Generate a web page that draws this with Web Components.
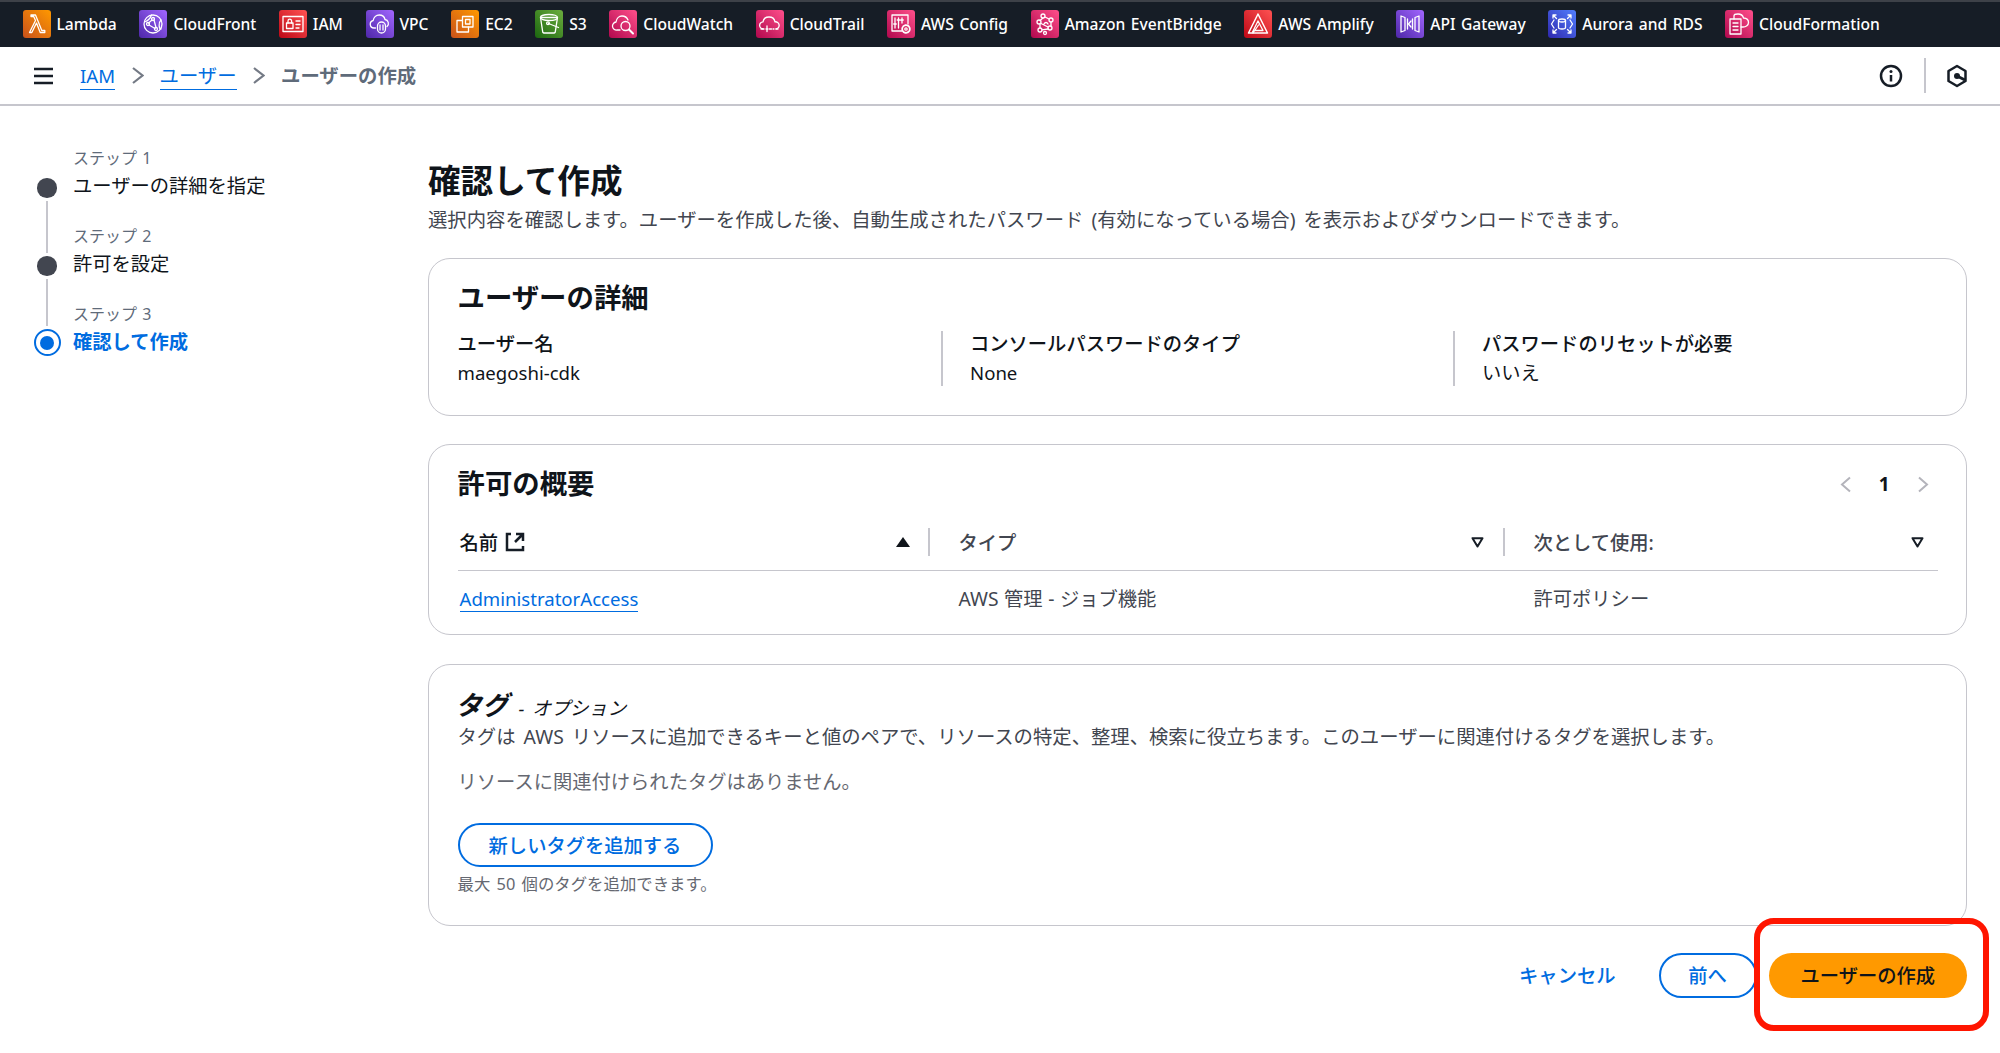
<!DOCTYPE html>
<html lang="ja"><head><meta charset="utf-8"><title>ユーザーの作成</title>
<style>
html,body{margin:0;padding:0;background:#fff;}
body{font-family:"Noto Sans","Noto Sans CJK JP",sans-serif;color:#0f141a;width:2000px;height:1053px;overflow:hidden;position:relative;word-spacing:3px;}
</style></head><body>
<aws-svc-bar>
<aws-svc icon="lambda">Lambda</aws-svc>
<aws-svc icon="cloudfront">CloudFront</aws-svc>
<aws-svc icon="iam">IAM</aws-svc>
<aws-svc icon="vpc">VPC</aws-svc>
<aws-svc icon="ec2">EC2</aws-svc>
<aws-svc icon="s3">S3</aws-svc>
<aws-svc icon="cloudwatch">CloudWatch</aws-svc>
<aws-svc icon="cloudtrail">CloudTrail</aws-svc>
<aws-svc icon="config">AWS Config</aws-svc>
<aws-svc icon="eventbridge">Amazon EventBridge</aws-svc>
<aws-svc icon="amplify">AWS Amplify</aws-svc>
<aws-svc icon="apigw">API Gateway</aws-svc>
<aws-svc icon="rds">Aurora and RDS</aws-svc>
<aws-svc icon="cfn">CloudFormation</aws-svc>
</aws-svc-bar>
<aws-crumbs></aws-crumbs>
<aws-layout>
  <aws-steps slot="side">
    <aws-step state="done" first label="ステップ 1">ユーザーの詳細を指定</aws-step>
    <aws-step state="done" label="ステップ 2">許可を設定</aws-step>
    <aws-step state="active" last label="ステップ 3">確認して作成</aws-step>
  </aws-steps>
  <aws-page-head heading="確認して作成">選択内容を確認します。ユーザーを作成した後、自動生成されたパスワード (有効になっている場合) を表示およびダウンロードできます。</aws-page-head>
  <aws-card heading="ユーザーの詳細">
    <aws-kv-row>
      <aws-kv label="ユーザー名"><span style="font-size:18.600px">maegoshi-cdk</span></aws-kv>
      <aws-kv label="コンソールパスワードのタイプ"><span style="font-size:18.600px">None</span></aws-kv>
      <aws-kv label="パスワードのリセットが必要">いいえ</aws-kv>
    </aws-kv-row>
  </aws-card>
  <aws-card heading="許可の概要" pager tall>
    <aws-perm-table></aws-perm-table>
  </aws-card>
  <aws-tags-card></aws-tags-card>
  <aws-actions></aws-actions>
</aws-layout>
<aws-annotation></aws-annotation>
<script>
const G={
 orange:['#c8511b','#ff9900'],purple:['#4d27a8','#a166ff'],red:['#bd0816','#ff5252'],
 green:['#1b660f','#6cae3e'],pink:['#b0084d','#ff4f8b'],blue:['#2e27ad','#527fff']};
const I={
 lambda:['orange','<path d="M6.500 22.500l6-12-1.800-4H8V5h4.500l6.300 15.500h3V22.500h-4.600L13.500 13l-4.700 9.500z"/>'],
 cloudfront:['purple','<circle cx="14" cy="14" r="9"/><circle cx="14" cy="9" r="1.500"/><circle cx="9" cy="14" r="1.500"/><circle cx="17" cy="19" r="1.500"/><path d="M13 10L9.500 13M10 15l6 3.500M15 10l2 7.500M5.500 12c3-1 6-4 7-7M22 10c-3 3-2 9 0 9"/>'],
 iam:['red','<rect x="4" y="6.500" width="20" height="15"/><rect x="7.500" y="13" width="6.500" height="5.500"/><path d="M9 13v-2a1.800 1.800 0 0 1 3.600 0v2M17 11h4M17 14.500h4M17 18h3"/>'],
 vpc:['purple','<path d="M9.500 18H8a3.800 3.800 0 0 1-.800-7.500C7.700 7.200 10.300 5 13.200 5c3 0 5.300 2 5.800 4.500a4 4 0 0 1 2 7"/><rect x="11.500" y="12" width="8" height="11" rx="4"/><path d="M14 15v5M17 15v5"/>'],
 ec2:['orange','<rect x="11.500" y="6.500" width="10.500" height="10.500"/><path d="M11.500 10.500H6V22h11.500v-5M14.500 9.500h4.500v4.500h-4.500z"/>'],
 s3:['green','<path d="M5.500 7.500h17l-2.300 14.800a1 1 0 0 1-1 .7H8.800a1 1 0 0 1-1-.7z"/><path d="M5.500 7.500c0-1.800 3.500-3 8.500-3s8.500 1.200 8.500 3-3.500 3-8.500 3-8.500-1.200-8.500-3z"/><path d="M13.500 13.500l10 4" /><circle cx="13" cy="13.300" r="1.400"/>'],
 cloudwatch:['pink','<path d="M11 20H8a4 4 0 0 1-1-8c.500-3.500 3-6 6-6 3 0 5 1.500 6 4"/><circle cx="16.500" cy="16" r="4.500"/><path d="M20 19.500l4 4" stroke-width="2"/>'],
 cloudtrail:['pink','<path d="M8 19H7.500a3.600 3.600 0 0 1-.500-7.200C7.500 9 10 7 13 7c3 0 5.500 2 6 4.800A3.600 3.600 0 0 1 20 19"/><path d="M5 19h3M10 19h8M20 19h3M11 16v6" stroke-dasharray="2 1.500"/>'],
 config:['pink','<path d="M15 21H5V5h16v9"/><path d="M8 8v10M11.500 8v10M15 8v5"/><path d="M6.800 14h2.400M10.300 10h2.400M13.800 10h2.400" stroke-width="1.500"/><circle cx="19" cy="19" r="3.800" fill="#d7235f" stroke-dasharray="1.600 .8" stroke-width="1.800"/><circle cx="19" cy="19" r="1.200"/>'],
 eventbridge:['pink','<circle cx="12" cy="6" r="2"/><circle cx="20" cy="10" r="2"/><circle cx="8" cy="12" r="2"/><circle cx="19" cy="18" r="2"/><circle cx="9" cy="20" r="2"/><circle cx="14" cy="23" r="1.500"/><path d="M14 7l4 2M10 13.500l7 3.500M12 8l-3 2.500M9 14v4M17 19l-6 .800M20 12v4M13 14c1-2 3-2 4 0"/>'],
 amplify:['red','<path d="M14 4L4.500 23h19z" stroke-width="1.500"/><path d="M14 11l-5.500 11M14 11l5 9.500M11 20.500h8M9 23l5.500-8" stroke-width="1.300"/>'],
 apigw:['purple','<path d="M5 6l4 1.500v13L5 22zM23 6l-4 1.500v13l4 1.500zM11.500 9v10M16.500 9v10"/><path d="M15 11l-2.500 3 2.500 3"/>'],
 rds:['blue','<ellipse cx="14" cy="10.500" rx="3.500" ry="1.500"/><path d="M10.500 10.500v7c0 .800 1.500 1.500 3.500 1.500s3.500-.7 3.500-1.500v-7M6 10l-2.500 4L6 18M22 10l2.500 4L22 18M5 5l3.500 3.500M5 5h3M5 5v3M23 5l-3.500 3.500M23 5h-3M23 5v3M5 23l3.500-3.500M5 23h3M5 23v-3M23 23l-3.500-3.500M23 23h-3M23 23v-3"/>'],
 cfn:['pink','<rect x="5" y="9" width="11" height="15"/><path d="M8 13h5M8 16.500h5M8 20h5M9 9V5.800C9 4.800 11 4 13 4c3 0 5 2 5.500 4 3 .200 5 2 5 4.500S21 17 18 17h-2"/>']
};
let uid=0;
function icon(name){const [g,body]=I[name];const id='g'+(uid++);const [a,b]=G[g];
 return `<svg width="28" height="28" viewBox="0 0 28 28" aria-hidden="true"><defs><linearGradient id="${id}" x1="0" y1="1" x2="1" y2="0"><stop offset="0" stop-color="${a}"/><stop offset="1" stop-color="${b}"/></linearGradient></defs><rect width="28" height="28" rx="3" fill="url(#${id})"/><g fill="none" stroke="#fff" stroke-width="1.300" stroke-linejoin="round" stroke-linecap="round">${body}</g></svg>`;}
function def(tag,html,setup){customElements.define(tag,class extends HTMLElement{
 connectedCallback(){if(this.shadowRoot)return;const s=this.attachShadow({mode:'open'});s.innerHTML=typeof html==='function'?html(this):html;if(setup)setup(this,s);}});}

def('aws-svc-bar',`<style>:host{display:flex;box-sizing:border-box;height:47px;background:#161d26;border-top:2px solid #3d4148;padding:8px 0 0 22.500px;gap:22.600px;align-items:flex-start;word-spacing:1.500px;}</style><slot></slot>`);
def('aws-svc',h=>`<style>:host{display:inline-flex;align-items:center;gap:6px;height:28px;color:#fff;font-size:15.600px;font-weight:500;line-height:28px;white-space:nowrap;}svg{display:block;flex:none;}</style>${icon(h.getAttribute('icon'))}<span><slot></slot></span>`);

const chev=`<svg width="12" height="17" viewBox="0 0 12 17"><path d="M1 1l9.500 7.500L1 16" fill="none" stroke="#747a85" stroke-width="2.200"/></svg>`;
def('aws-crumbs',`<style>:host{display:flex;box-sizing:border-box;height:59px;border-bottom:2px solid #c6c6cd;align-items:center;padding:0 0 0 33px;font-size:19.350px;color:#424650;}
a{color:#006ce0;text-decoration:none;border-bottom:1.500px solid #006ce0;line-height:24px;height:25px;display:block;margin-top:2px;}
a.iam{font-size:18.600px;}
.menu{display:block;margin-right:26px;}
.sep{margin:0 16px 0 16.500px;display:block;}
.cur{font-weight:600;color:#5f6b7a;line-height:24px;}
.sp{flex:1;}
.div{width:1.500px;height:35px;background:#c6c6cd;margin:0 20.500px 0 21px;}
svg{display:block;flex:none;}
</style>
<svg class="menu" width="21" height="18" viewBox="0 0 21 18"><path d="M1 2h19M1 9h19M1 16h19" stroke="#161d26" stroke-width="2.500"/></svg>
<a class="iam">IAM</a><span class="sep">${chev}</span><a>ユーザー</a><span class="sep">${chev}</span><span class="cur">ユーザーの作成</span><span class="sp"></span>
<svg width="24" height="24" viewBox="0 0 24 24"><circle cx="12" cy="12" r="10" fill="none" stroke="#161d26" stroke-width="2.500"/><path d="M12 11v6.500" stroke="#161d26" stroke-width="2.500"/><circle cx="12" cy="7.500" r="1.500" fill="#161d26"/></svg>
<span class="div"></span>
<svg width="22" height="24" viewBox="0 0 22 24" style="margin-right:32px"><path d="M11 2l8.500 5v10L11 22l-8.500-5V7z" fill="none" stroke="#161d26" stroke-width="2.500" stroke-linejoin="round"/><circle cx="11" cy="12" r="3" fill="#161d26"/><path d="M11 12l8 4" stroke="#161d26" stroke-width="3"/></svg>`);

def('aws-layout',`<style>:host{display:grid;grid-template-columns:428px 1539px;height:947px;align-content:start;}
.side{grid-row:1/span 9;padding-top:40px;}
.main{display:flex;flex-direction:column;padding-top:55px;}
</style><div class="side"><slot name="side"></slot></div><div class="main"><slot></slot></div>`);
def('aws-steps',`<style>:host{display:block;padding-left:33px;word-spacing:1px;}</style><slot></slot>`);
def('aws-step',h=>{const act=h.getAttribute('state')==='active',first=h.hasAttribute('first'),last=h.hasAttribute('last');
 return `<style>:host{display:grid;grid-template-columns:28px 1fr;column-gap:12px;height:78px;}
.rail{display:flex;flex-direction:column;align-items:center;}
.top{height:${first?32:act?24:29}px;width:2.500px;background:${first?'transparent':'#c6c6cd'};margin-bottom:${first?0:3}px;flex:none;}
.dot{width:19.500px;height:19.500px;border-radius:50%;background:#424650;flex:none;}
.ring{width:27px;height:27px;box-sizing:border-box;border:2.500px solid #006ce0;border-radius:50%;display:flex;align-items:center;justify-content:center;flex:none;}
.ring i{display:block;width:14px;height:14px;background:#006ce0;border-radius:50%;}
.bot{flex:1;width:2.500px;background:${last?'transparent':'#c6c6cd'};margin-top:3px;}
.l{font-size:16px;line-height:24px;color:#5f6b7a;}
.t{font-size:19.300px;line-height:30px;padding-top:1px;color:${act?'#006ce0':'#0f141a'};font-weight:${act?700:400};}
</style><div class="rail"><div class="top"></div>${act?'<div class="ring"><i></i></div>':'<div class="dot"></div>'}<div class="bot"></div></div>
<div><div class="l">${h.getAttribute('label')}</div><div class="t"><slot></slot></div></div>`});
def('aws-page-head',h=>`<style>:host{display:block;margin-bottom:25px;}
h1{margin:0;font-size:32.600px;line-height:40px;font-weight:700;color:#0f141a;}
p{margin:6px 0 0;font-size:19.350px;line-height:26px;color:#424650;white-space:nowrap;}</style><h1>${h.getAttribute('heading')}</h1><p><slot></slot></p>`);
const cv=(d,c)=>`<svg width="13" height="17" viewBox="0 0 13 17"><path d="${d}" fill="none" stroke="${c}" stroke-width="2"/></svg>`;
def('aws-card',h=>`<style>:host{display:block;box-sizing:border-box;border:1.500px solid #c6c6cd;border-radius:22px;padding:22px 28.500px 0;margin-bottom:28.500px;background:#fff;}
.h{display:flex;align-items:center;height:34px;margin-bottom:${h.hasAttribute('tall')?27:15.5}px;}
h2{margin:0;font-size:27.400px;line-height:34px;font-weight:700;flex:1;}
.p{display:flex;align-items:center;font-weight:700;font-size:19px;margin-right:8px;}
.p b{margin:0 27px;font-weight:700;}
svg{display:block;}
</style><div class="h"><h2>${h.getAttribute('heading')}</h2>${h.hasAttribute('pager')?`<div class="p">${cv('M11 1.500L3 8.500l8 7','#b4b4bb')}<b>1</b>${cv('M2 1.500l8 7-8 7','#b4b4bb')}</div>`:''}</div><slot></slot>`);
def('aws-kv-row',`<style>:host{display:grid;grid-template-columns:483px 512px 1fr;padding-bottom:29px;}</style><slot></slot>`);
def('aws-kv',h=>`<style>:host{display:block;height:55px;}:host(:not(:first-child)){border-left:2px solid #c6c6cd;padding-left:27.500px;}
.l{font-size:19.300px;line-height:26px;font-weight:500;}.v{font-size:19.300px;line-height:26px;margin-top:3px;color:#0f141a;}</style><div class="l">${h.getAttribute('label')}</div><div class="v"><slot></slot></div>`);
const upSolid=`<svg width="14" height="10" viewBox="0 0 14 10"><path d="M7 0l7 10H0z" fill="#0f141a"/></svg>`;
const dnOut=`<svg width="13" height="11" viewBox="0 0 13 11"><path d="M1.500 1.200h10L6.500 9.500z" fill="none" stroke="#161d26" stroke-width="2" stroke-linejoin="round"/></svg>`;
def('aws-perm-table',`<style>:host{display:block;padding-bottom:12px;font-size:19.300px;}
.g{display:grid;grid-template-columns:472px 575px 1fr;}
.hd{height:42px;border-bottom:1.500px solid #c6c6cd;align-items:start;}
.th{display:flex;align-items:center;height:28px;margin-top:0;font-weight:500;color:#424650;padding-left:29px;}
.th:first-child{padding-left:2px;color:#0f141a;}
.th .n{flex:1;display:flex;align-items:center;gap:6.500px;}
.th .s{width:14px;display:flex;justify-content:center;margin-right:18px;}
.th:not(:last-child){border-right:2px solid #c6c6cd;box-sizing:border-box;}
.th:last-child .s{margin-right:13px;}
.td{padding-left:29px;color:#424650;line-height:26px;padding-top:15px;height:51px;box-sizing:border-box;word-spacing:.5px;}
.td:first-child{padding-left:2px;}
a{color:#006ce0;border-bottom:1.500px solid #006ce0;text-decoration:none;display:inline-block;line-height:25px;font-size:18.600px;}
svg{display:block;}
</style>
<div class="g hd">
<div class="th"><span class="n">名前<svg width="20" height="20" viewBox="0 0 20 20" fill="none" stroke="#161d26" stroke-width="2.500"><path d="M6 2H2v16h16v-4M11 2h7v7M18 2l-8 8"/></svg></span><span class="s">${upSolid}</span></div>
<div class="th"><span class="n">タイプ</span><span class="s">${dnOut}</span></div>
<div class="th"><span class="n">次として使用:</span><span class="s">${dnOut}</span></div>
</div>
<div class="g"><div class="td"><a>AdministratorAccess</a></div><div class="td">AWS 管理 - ジョブ機能</div><div class="td">許可ポリシー</div></div>`);
def('aws-btn',h=>{const p=h.hasAttribute('primary'),l=h.hasAttribute('link');return `<style>:host{display:inline-flex;box-sizing:border-box;height:45px;align-items:center;justify-content:center;border-radius:23px;font-size:19.300px;font-weight:500;white-space:nowrap;
${p?'background:#ff9900;color:#0f141a;':l?'color:#006ce0;':'border:2.500px solid #006ce0;color:#006ce0;'}}</style><slot></slot>`});
def('aws-tags-card',`<style>:host{display:block;box-sizing:border-box;border:1.500px solid #c6c6cd;border-radius:22px;padding:22.500px 28.500px 0;height:262px;margin-bottom:27px;}
.h{line-height:36px;height:36px;font-style:italic;display:flex;align-items:baseline;margin-left:-2px;}
.h b{font-size:26.500px;font-weight:700;}
.h span{font-size:18.800px;margin-left:10px;}
.d{font-size:19.350px;line-height:26px;color:#424650;margin-top:.5px;white-space:nowrap;}
.e{font-size:19.300px;line-height:26px;color:#656871;margin-top:19.300px;}
aws-btn{width:255px;height:44px;margin-top:28px;display:flex;}
.c{font-size:16.400px;line-height:22px;color:#656871;margin-top:6.500px;word-spacing:2px;}
</style><div class="h"><b>タグ</b><span>- オプション</span></div>
<div class="d">タグは AWS リソースに追加できるキーと値のペアで、リソースの特定、整理、検索に役立ちます。このユーザーに関連付けるタグを選択します。</div>
<div class="e">リソースに関連付けられたタグはありません。</div>
<aws-btn>新しいタグを追加する</aws-btn>
<div class="c">最大 50 個のタグを追加できます。</div>`);
def('aws-actions',`<style>:host{display:flex;justify-content:flex-end;align-items:center;gap:12px;height:45px;}
.c{width:98px;}.p{width:198.500px;}.l{margin-right:31px;}</style>
<aws-btn link class="l">キャンセル</aws-btn><aws-btn class="c">前へ</aws-btn><aws-btn primary class="p">ユーザーの作成</aws-btn>`);
def('aws-annotation',`<style>:host{position:absolute;left:1754px;top:918px;width:235px;height:113px;box-sizing:border-box;border:6.500px solid #ff1500;border-radius:20px;pointer-events:none;}</style>`);
</script>
</body></html>
